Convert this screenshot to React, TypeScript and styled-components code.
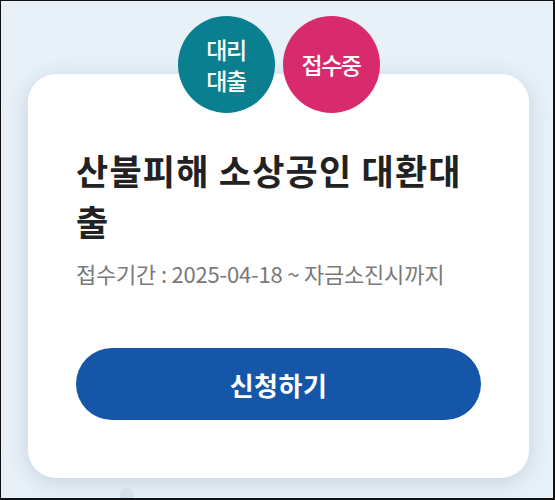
import React from "react";
import styled, { createGlobalStyle } from "styled-components";

const GlobalStyle = createGlobalStyle`
  html, body {
    margin: 0;
    padding: 0;
  }
  body {
    font-family: "Noto Sans CJK KR", "Noto Sans", sans-serif;
  }
`;

const Frame = styled.div`
  box-sizing: border-box;
  width: 555px;
  height: 500px;
  overflow: hidden;
  background: #e8f1f8;
  border-style: solid;
  border-color: #111;
  border-width: 1px 2px 2px 1px;
  padding: 15px 24px 0 27px;
`;

const BadgeRow = styled.div`
  position: relative;
  z-index: 1;
  display: flex;
  justify-content: center;
  gap: 8px;
  margin-bottom: -39px;
`;

const Badge = styled.div<{ $bg: string }>`
  width: 97px;
  height: 97px;
  border-radius: 50%;
  background: ${(p) => p.$bg};
  color: #fff;
  display: flex;
  align-items: center;
  justify-content: center;
  text-align: center;
  font-size: 23px;
  font-weight: 500;
  line-height: 31px;
  letter-spacing: -1.5px;
`;

const Card = styled.div`
  background: #fff;
  border-radius: 28px;
  box-shadow: 0 4px 22px rgba(40, 70, 110, 0.18);
  padding: 70px 48px 0 48px;
  height: 404px;
  box-sizing: border-box;
`;

const Title = styled.h2`
  margin: 0;
  font-size: 35px;
  font-weight: 700;
  line-height: 51px;
  letter-spacing: 1.2px;
  color: #222;
`;

const Period = styled.p`
  margin: 13px 0 0 0;
  font-size: 22px;
  line-height: 28px;
  letter-spacing: -0.2px;
  color: #7a7a7a;
`;

const ApplyButton = styled.button`
  display: block;
  width: 100%;
  height: 72px;
  margin-top: 61px;
  border: 0;
  border-radius: 36px;
  background: #1556a9;
  color: #fff;
  font-family: inherit;
  font-size: 26px;
  font-weight: 700;
  letter-spacing: 0.5px;
  cursor: pointer;
`;

const Dots = styled.div`
  display: flex;
  gap: 10px;
  padding: 10px 0 0 92px;
`;

const Dot = styled.span`
  width: 14px;
  height: 14px;
  border-radius: 50%;
  background: #d3e2ec;
`;

export default function App() {
  return (
    <>
      <GlobalStyle />
      <Frame>
        <BadgeRow>
          <Badge $bg="#0a7f90">
            대리
            <br />
            대출
          </Badge>
          <Badge $bg="#d82b6e">접수중</Badge>
        </BadgeRow>
        <Card>
          <Title>산불피해 소상공인 대환대출</Title>
          <Period>접수기간 : 2025-04-18 ~ 자금소진시까지</Period>
          <ApplyButton>신청하기</ApplyButton>
        </Card>
        <Dots>
          <Dot />
        </Dots>
      </Frame>
    </>
  );
}
